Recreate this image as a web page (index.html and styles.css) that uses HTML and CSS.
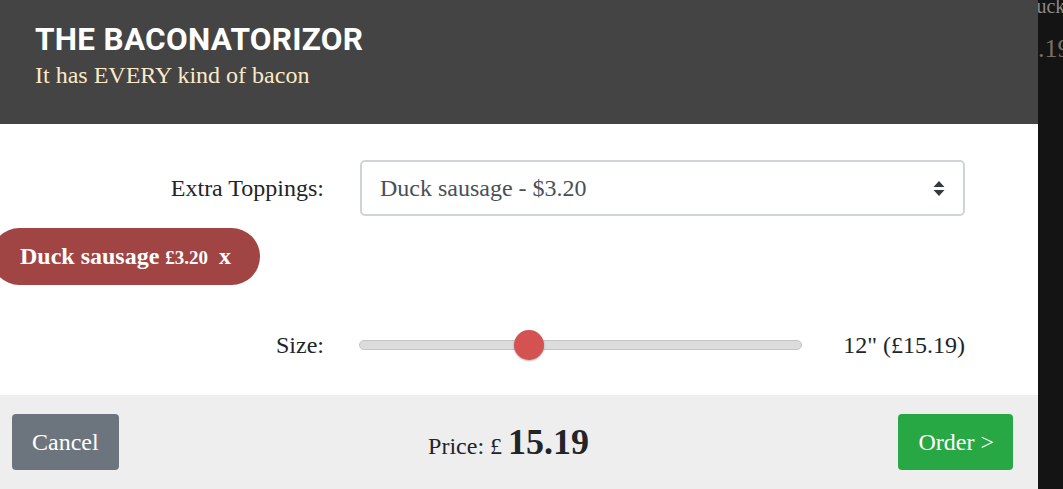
FILE: index.html
```html
<!DOCTYPE html>
<html>
<head>
<meta charset="utf-8">
<link rel="stylesheet" href="styles.css">
</head>
<body>
<div class="page">
  <div class="modal">
    <div class="header">
      <div class="title">THE BACONATORIZOR</div>
      <div class="subtitle">It has EVERY kind of bacon</div>
    </div>
    <div class="body">
      <div class="row">
        <div class="label">Extra Toppings:</div>
        <div class="select">
          <span>Duck sausage - $3.20</span>
          <svg class="arrows" width="12" height="15" viewBox="0 0 12 15"><path d="M6 0 L11.5 6 H0.5 Z M0.5 9 H11.5 L6 15 Z" fill="#343a40"/></svg>
        </div>
      </div>
      <div class="pill"><span class="pname">Duck sausage</span><span class="pprice">£3.20</span><span class="px">x</span></div>
      <div class="row size-row">
        <div class="label">Size:</div>
        <div class="size-ctrl">
          <div class="track"><div class="thumb"></div></div>
          <div class="size-val">12" (£15.19)</div>
        </div>
      </div>
    </div>
    <div class="footer">
      <div class="btn cancel">Cancel</div>
      <div class="price">Price: £ <span class="amount">15.19</span></div>
      <div class="btn order">Order &gt;</div>
    </div>
  </div>
  <div class="strip">
    <div class="s1">Duck</div>
    <div class="s2">15.19</div>
  </div>
</div>
</body>
</html>
```
FILE: styles.css
```css
html, body { margin: 0; padding: 0; }
body {
  width: 1063px; height: 489px; overflow: hidden;
  background: #141414;
  font-family: "Liberation Serif", "Times New Roman", serif;
  color: #212529;
}
.page { display: flex; height: 489px; }
.modal { width: 1038px; flex: none; display: flex; flex-direction: column; background: #fff; }
.header { background: #444444; height: 124px; box-sizing: border-box; padding: 22px 35px 0; }
.title {
  font-family: "Roboto", "Liberation Sans", sans-serif; font-weight: 700;
  font-size: 31.5px; line-height: 36px; color: #fff; letter-spacing: 0.3px;
}
.subtitle { font-size: 24px; line-height: 28px; color: #fce9c6; margin-top: 3px; }
.body { flex: 1; padding-top: 36px; }
.row { display: grid; grid-template-columns: 324px 605px; column-gap: 36px; align-items: center; }
.label { text-align: right; font-size: 24px; }
.select {
  height: 56px; box-sizing: border-box; border: 2px solid #ced4da; border-radius: 5px;
  display: flex; align-items: center; justify-content: space-between;
  padding: 0 18px 0 18px; font-size: 24px; color: #495057;
}
.pill {
  display: inline-flex; align-items: baseline; height: 57px; line-height: 57px;
  margin-top: 12px; margin-left: -9px; padding: 0 29px 0 29px;
  background: #a04444; color: #fff; border-radius: 29px; font-weight: 700;
}
.pname { font-size: 24px; }
.pprice { font-size: 19px; margin-left: 6px; }
.px { font-size: 24px; margin-left: 11px; }
.size-row { margin-top: 45px; height: 30px; }
.size-ctrl { display: flex; align-items: center; justify-content: space-between; margin-left: -1px; }
.track {
  position: relative; width: 443px; height: 10px; box-sizing: border-box;
  background: #dcdcdc; border: 1px solid #c4c4c4; border-radius: 5px;
}
.thumb {
  position: absolute; left: 154px; top: -11px; width: 30px; height: 30px;
  border-radius: 50%; background: #d45252; box-shadow: 0 1px 2px rgba(0,0,0,0.3);
}
.size-val { font-size: 24px; }
.footer {
  height: 94px; box-sizing: border-box; background: #eeeeee;
  display: flex; align-items: center; justify-content: space-between; padding: 0 25px 0 12px;
}
.btn { height: 56px; display: flex; align-items: center; border-radius: 4px; color: #fff; font-size: 24px; }
.cancel { background: #6c757d; padding: 0 20px; }
.order { background: #28a745; padding: 0 19px 0 20px; }
.price { font-size: 24px; }
.amount { font-size: 36px; font-weight: 700; }
.strip { flex: 1; overflow: hidden; white-space: nowrap; }
.s1 { font-size: 20px; color: #8a8a8a; margin-left: -16px; line-height: 20px; margin-top: -4px; }
.s2 { font-size: 26px; color: #7a7060; margin-left: -26px; margin-top: 18px; }
```
